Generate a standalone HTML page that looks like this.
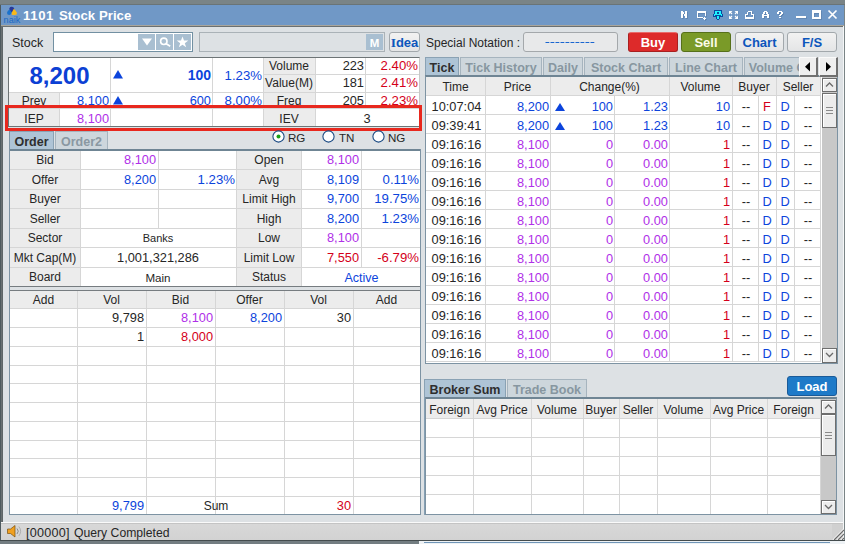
<!DOCTYPE html>
<html><head><meta charset="utf-8"><style>
html,body{margin:0;padding:0;width:845px;height:544px;overflow:hidden;position:relative}
body>div,body>svg{position:absolute}
.t{font-family:"Liberation Sans",sans-serif;white-space:nowrap;overflow:visible}
</style></head><body>
<div style="left:0px;top:0px;width:845px;height:544px;background:#7a8486"></div>
<div style="left:0px;top:4px;width:845px;height:1px;background:#6a7476"></div>
<div style="left:1px;top:5px;width:843px;height:20px;background:#7098c6"></div>
<div style="left:0px;top:5px;width:1px;height:539px;background:#4e5a5e"></div>
<div style="left:1px;top:26px;width:1px;height:514px;background:#8e9496"></div>
<div style="left:1px;top:25px;width:843px;height:1px;background:#a8a59c"></div>
<div style="left:1px;top:26px;width:843px;height:518px;background:#6a7072"></div>
<div style="left:3px;top:27px;width:840px;height:495px;background:#dde1e4"></div>
<div style="left:843px;top:26px;width:1px;height:515px;background:#f4f6f7"></div>
<div style="left:2px;top:27px;width:1px;height:495px;background:#5e6668"></div>
<div class="t" style="left:23px;top:6px;width:40px;height:20px;line-height:20px;text-align:left;color:#fff;font-size:13.2px;font-weight:700;letter-spacing:0.6px">1101</div>
<div class="t" style="left:59px;top:6px;width:100px;height:20px;line-height:20px;text-align:left;color:#fff;font-size:13.2px;font-weight:700;letter-spacing:0.05px">Stock Price</div>
<div class="t" style="left:12px;top:33px;width:40px;height:20px;line-height:20px;text-align:left;color:#262626;font-size:12.5px;font-weight:400;">Stock</div>
<div style="left:53px;top:32px;width:140px;height:20px;background:#fff;border:1px solid #7290a2;box-sizing:border-box"></div>
<div style="left:138px;top:34px;width:17px;height:16px;background:#a9bfd1"></div>
<div style="left:156px;top:34px;width:17px;height:16px;background:#a9bfd1"></div>
<div style="left:174px;top:34px;width:17px;height:16px;background:#a9bfd1"></div>
<div style="left:199px;top:32px;width:186px;height:20px;background:#dde1e4;border:1px solid #aab2b7;box-sizing:border-box"></div>
<div style="left:366px;top:34px;width:17px;height:16px;background:#a9bfd1"></div>
<div class="t" style="left:366px;top:33px;width:17px;height:20px;line-height:20px;text-align:center;color:#fff;font-size:11.5px;font-weight:700;">M</div>
<div style="left:389px;top:32px;width:31px;height:20px;background:linear-gradient(#f2f2f2,#e4e5e6);border:1px solid #a2a8ac;border-radius:3px;box-sizing:border-box"></div>
<div class="t" style="left:389px;top:33px;width:31px;height:20px;line-height:20px;text-align:center;color:#0c56bc;font-size:13px;font-weight:700;"><span style='font-family:"Liberation Serif",serif;font-size:13.5px'>I</span>dea</div>
<div class="t" style="left:426px;top:33px;width:100px;height:20px;line-height:20px;text-align:left;color:#262626;font-size:12px;font-weight:400;">Special Notation :</div>
<div style="left:523px;top:32px;width:95px;height:20px;background:#e8e9ea;border:1px solid #a4a8ab;border-radius:3px;box-sizing:border-box"></div>
<svg style="position:absolute;left:545px;top:40px" width="52" height="4"><line x1="0.5" y1="2.5" x2="50.5" y2="2.5" stroke="#1a66d0" stroke-width="1.2" stroke-dasharray="3.8 1.2"/></svg>
<div style="left:628px;top:32px;width:50px;height:20px;background:#dd2a2a;border:1px solid #a82020;border-top-color:#e86a6a;border-radius:3px;box-sizing:border-box"></div>
<div class="t" style="left:628px;top:33px;width:50px;height:20px;line-height:20px;text-align:center;color:#fff;font-size:13px;font-weight:700;">Buy</div>
<div style="left:681px;top:32px;width:50px;height:20px;background:#7a9a28;border:1px solid #56701a;border-radius:3px;box-sizing:border-box"></div>
<div class="t" style="left:681px;top:33px;width:50px;height:20px;line-height:20px;text-align:center;color:#fcfce8;font-size:13px;font-weight:700;">Sell</div>
<div style="left:735px;top:32px;width:49px;height:20px;background:linear-gradient(#f2f2f2,#e4e5e6);border:1px solid #a2a8ac;border-radius:3px;box-sizing:border-box"></div>
<div class="t" style="left:735px;top:33px;width:49px;height:20px;line-height:20px;text-align:center;color:#0c56bc;font-size:13px;font-weight:700;">Chart</div>
<div style="left:787px;top:32px;width:50px;height:20px;background:linear-gradient(#f2f2f2,#e4e5e6);border:1px solid #a2a8ac;border-radius:3px;box-sizing:border-box"></div>
<div class="t" style="left:787px;top:33px;width:50px;height:20px;line-height:20px;text-align:center;color:#0c56bc;font-size:13px;font-weight:700;">F/S</div>
<div style="left:8px;top:57px;width:412px;height:70px;background:#fff;border:1px solid #6d7476;border-right-color:#c8c8c8;box-sizing:border-box"></div>
<div style="left:9px;top:93px;width:50px;height:33px;background:#ececec"></div>
<div style="left:263px;top:58px;width:52px;height:68px;background:#ececec"></div>
<div style="left:9px;top:92px;width:410px;height:1px;background:#d6d6d6"></div>
<div style="left:9px;top:108px;width:410px;height:1px;background:#d6d6d6"></div>
<div style="left:263px;top:74px;width:156px;height:1px;background:#d6d6d6"></div>
<div style="left:59px;top:92px;width:1px;height:34px;background:#d6d6d6"></div>
<div style="left:110px;top:58px;width:1px;height:68px;background:#d6d6d6"></div>
<div style="left:212px;top:58px;width:1px;height:68px;background:#d6d6d6"></div>
<div style="left:263px;top:58px;width:1px;height:68px;background:#d6d6d6"></div>
<div style="left:315px;top:58px;width:1px;height:68px;background:#d6d6d6"></div>
<div style="left:365px;top:58px;width:1px;height:50px;background:#d6d6d6"></div>
<div class="t" style="left:9px;top:66px;width:101px;height:20px;line-height:20px;text-align:center;color:#0c40d4;font-size:24px;font-weight:700;">8,200</div>
<div class="t" style="left:150px;top:65px;width:61px;height:20px;line-height:20px;text-align:right;color:#0c44dc;font-size:14px;font-weight:700;">100</div>
<div class="t" style="left:200px;top:66px;width:62px;height:20px;line-height:20px;text-align:right;color:#0c44dc;font-size:13.2px;font-weight:400;">1.23%</div>
<div class="t" style="left:263px;top:56px;width:52px;height:20px;line-height:20px;text-align:center;color:#262626;font-size:12px;font-weight:400;">Volume</div>
<div class="t" style="left:300px;top:56px;width:64px;height:20px;line-height:20px;text-align:right;color:#262626;font-size:12.8px;font-weight:400;">223</div>
<div class="t" style="left:350px;top:56px;width:68px;height:20px;line-height:20px;text-align:right;color:#d4001a;font-size:13.2px;font-weight:400;">2.40%</div>
<div class="t" style="left:263px;top:73px;width:52px;height:20px;line-height:20px;text-align:center;color:#262626;font-size:12px;font-weight:400;">Value(M)</div>
<div class="t" style="left:300px;top:73px;width:64px;height:20px;line-height:20px;text-align:right;color:#262626;font-size:12.8px;font-weight:400;">181</div>
<div class="t" style="left:350px;top:73px;width:68px;height:20px;line-height:20px;text-align:right;color:#d4001a;font-size:13.2px;font-weight:400;">2.41%</div>
<div class="t" style="left:263px;top:91px;width:52px;height:20px;line-height:20px;text-align:center;color:#262626;font-size:12px;font-weight:400;">Freq</div>
<div class="t" style="left:300px;top:91px;width:64px;height:20px;line-height:20px;text-align:right;color:#262626;font-size:12.8px;font-weight:400;">205</div>
<div class="t" style="left:350px;top:91px;width:68px;height:20px;line-height:20px;text-align:right;color:#d4001a;font-size:13.2px;font-weight:400;">2.23%</div>
<div class="t" style="left:9px;top:91px;width:50px;height:20px;line-height:20px;text-align:center;color:#262626;font-size:12px;font-weight:400;">Prev</div>
<div class="t" style="left:40px;top:91px;width:69px;height:20px;line-height:20px;text-align:right;color:#0c44dc;font-size:12.8px;font-weight:400;">8,100</div>
<div class="t" style="left:150px;top:91px;width:61px;height:20px;line-height:20px;text-align:right;color:#0c44dc;font-size:12.8px;font-weight:400;">600</div>
<div class="t" style="left:200px;top:91px;width:62px;height:20px;line-height:20px;text-align:right;color:#0c44dc;font-size:13.2px;font-weight:400;">8.00%</div>
<div class="t" style="left:9px;top:109px;width:50px;height:20px;line-height:20px;text-align:center;color:#262626;font-size:12px;font-weight:400;">IEP</div>
<div class="t" style="left:40px;top:109px;width:69px;height:20px;line-height:20px;text-align:right;color:#b030e8;font-size:12.8px;font-weight:400;">8,100</div>
<div class="t" style="left:263px;top:109px;width:52px;height:20px;line-height:20px;text-align:center;color:#262626;font-size:12px;font-weight:400;">IEV</div>
<div class="t" style="left:315px;top:109px;width:104px;height:20px;line-height:20px;text-align:center;color:#262626;font-size:12.8px;font-weight:400;">3</div>
<svg style="position:absolute;left:113px;top:70px" width="10" height="9"><polygon points="5,0 10,8.5 0,8.5" fill="#0c44dc"/></svg>
<svg style="position:absolute;left:113px;top:96px" width="10" height="9"><polygon points="5,0 10,8.5 0,8.5" fill="#0c44dc"/></svg>
<div style="left:5px;top:105px;width:417px;height:26px;border:3px solid #e8281e;box-sizing:border-box"></div>
<div style="left:9px;top:131px;width:45px;height:19px;background:#aec4d6;border:1px solid #8aa2b4;border-bottom:none;box-sizing:border-box"></div>
<div class="t" style="left:9px;top:132px;width:45px;height:20px;line-height:20px;text-align:center;color:#2e2e2e;font-size:12.5px;font-weight:700;">Order</div>
<div style="left:55px;top:131px;width:53px;height:19px;background:#cdd6dc;border:1px solid #a6b4be;border-bottom:none;box-sizing:border-box"></div>
<div class="t" style="left:55px;top:132px;width:53px;height:20px;line-height:20px;text-align:center;color:#8a98a2;font-size:12.5px;font-weight:700;">Order2</div>
<svg style="position:absolute;left:272px;top:130px" width="13" height="13"><circle cx="6.5" cy="6.5" r="5.6" fill="#fff" stroke="#1c4c84" stroke-width="1.1"/></svg>
<div class="t" style="left:288px;top:128px;width:30px;height:20px;line-height:20px;text-align:left;color:#262626;font-size:11.6px;font-weight:400;">RG</div>
<svg style="position:absolute;left:322px;top:130px" width="13" height="13"><circle cx="6.5" cy="6.5" r="5.6" fill="#fff" stroke="#1c4c84" stroke-width="1.1"/></svg>
<div class="t" style="left:339px;top:128px;width:30px;height:20px;line-height:20px;text-align:left;color:#262626;font-size:11.6px;font-weight:400;">TN</div>
<svg style="position:absolute;left:372px;top:130px" width="13" height="13"><circle cx="6.5" cy="6.5" r="5.6" fill="#fff" stroke="#1c4c84" stroke-width="1.1"/></svg>
<div class="t" style="left:388px;top:128px;width:30px;height:20px;line-height:20px;text-align:left;color:#262626;font-size:11.6px;font-weight:400;">NG</div>
<svg style="position:absolute;left:272px;top:130px" width="13" height="13"><circle cx="6.5" cy="6.5" r="2" fill="#18a018"/></svg>
<div style="left:10px;top:151px;width:410px;height:135px;background:#fff"></div>
<div style="left:10px;top:149px;width:410px;height:2px;background:#6f8594"></div>
<div style="left:10px;top:286px;width:410px;height:1px;background:#767c80"></div>
<div style="left:10px;top:290px;width:410px;height:1px;background:#767c80"></div>
<div style="left:9px;top:131px;width:1px;height:384px;background:#7d93a3"></div>
<div style="left:420px;top:149px;width:1px;height:366px;background:#7d93a3"></div>
<div style="left:10px;top:151px;width:70px;height:135px;background:#ececec"></div>
<div style="left:237px;top:151px;width:64px;height:135px;background:#ececec"></div>
<div style="left:10px;top:169px;width:410px;height:1px;background:#d6d6d6"></div>
<div style="left:10px;top:189px;width:410px;height:1px;background:#d6d6d6"></div>
<div style="left:10px;top:208px;width:410px;height:1px;background:#d6d6d6"></div>
<div style="left:10px;top:228px;width:410px;height:1px;background:#d6d6d6"></div>
<div style="left:10px;top:247px;width:410px;height:1px;background:#d6d6d6"></div>
<div style="left:10px;top:267px;width:410px;height:1px;background:#d6d6d6"></div>
<div style="left:80px;top:151px;width:1px;height:135px;background:#d6d6d6"></div>
<div style="left:236px;top:151px;width:1px;height:135px;background:#d6d6d6"></div>
<div style="left:301px;top:151px;width:1px;height:135px;background:#d6d6d6"></div>
<div style="left:158px;top:151px;width:1px;height:77px;background:#d6d6d6"></div>
<div style="left:361px;top:151px;width:1px;height:116px;background:#d6d6d6"></div>
<div class="t" style="left:10px;top:150px;width:70px;height:20px;line-height:20px;text-align:center;color:#262626;font-size:12px;font-weight:400;">Bid</div>
<div class="t" style="left:237px;top:150px;width:64px;height:20px;line-height:20px;text-align:center;color:#262626;font-size:12px;font-weight:400;">Open</div>
<div class="t" style="left:10px;top:170px;width:70px;height:20px;line-height:20px;text-align:center;color:#262626;font-size:12px;font-weight:400;">Offer</div>
<div class="t" style="left:237px;top:170px;width:64px;height:20px;line-height:20px;text-align:center;color:#262626;font-size:12px;font-weight:400;">Avg</div>
<div class="t" style="left:10px;top:189px;width:70px;height:20px;line-height:20px;text-align:center;color:#262626;font-size:12px;font-weight:400;">Buyer</div>
<div class="t" style="left:237px;top:189px;width:64px;height:20px;line-height:20px;text-align:center;color:#262626;font-size:12px;font-weight:400;">Limit High</div>
<div class="t" style="left:10px;top:209px;width:70px;height:20px;line-height:20px;text-align:center;color:#262626;font-size:12px;font-weight:400;">Seller</div>
<div class="t" style="left:237px;top:209px;width:64px;height:20px;line-height:20px;text-align:center;color:#262626;font-size:12px;font-weight:400;">High</div>
<div class="t" style="left:10px;top:228px;width:70px;height:20px;line-height:20px;text-align:center;color:#262626;font-size:12px;font-weight:400;">Sector</div>
<div class="t" style="left:237px;top:228px;width:64px;height:20px;line-height:20px;text-align:center;color:#262626;font-size:12px;font-weight:400;">Low</div>
<div class="t" style="left:10px;top:248px;width:70px;height:20px;line-height:20px;text-align:center;color:#262626;font-size:12px;font-weight:400;">Mkt Cap(M)</div>
<div class="t" style="left:237px;top:248px;width:64px;height:20px;line-height:20px;text-align:center;color:#262626;font-size:12px;font-weight:400;">Limit Low</div>
<div class="t" style="left:10px;top:267px;width:70px;height:20px;line-height:20px;text-align:center;color:#262626;font-size:12px;font-weight:400;">Board</div>
<div class="t" style="left:237px;top:267px;width:64px;height:20px;line-height:20px;text-align:center;color:#262626;font-size:12px;font-weight:400;">Status</div>
<div class="t" style="left:78px;top:150px;width:78px;height:20px;line-height:20px;text-align:right;color:#b030e8;font-size:12.8px;font-weight:400;">8,100</div>
<div class="t" style="left:78px;top:170px;width:78px;height:20px;line-height:20px;text-align:right;color:#0c44dc;font-size:12.8px;font-weight:400;">8,200</div>
<div class="t" style="left:157px;top:170px;width:78px;height:20px;line-height:20px;text-align:right;color:#0c44dc;font-size:13.2px;font-weight:400;">1.23%</div>
<div class="t" style="left:80px;top:228px;width:156px;height:20px;line-height:20px;text-align:center;color:#262626;font-size:11px;font-weight:400;">Banks</div>
<div class="t" style="left:80px;top:248px;width:156px;height:20px;line-height:20px;text-align:center;color:#262626;font-size:12.8px;font-weight:400;">1,001,321,286</div>
<div class="t" style="left:80px;top:268px;width:156px;height:20px;line-height:20px;text-align:center;color:#262626;font-size:11.6px;font-weight:400;">Main</div>
<div class="t" style="left:281px;top:150px;width:78px;height:20px;line-height:20px;text-align:right;color:#b030e8;font-size:12.8px;font-weight:400;">8,100</div>
<div class="t" style="left:281px;top:170px;width:78px;height:20px;line-height:20px;text-align:right;color:#0c44dc;font-size:12.8px;font-weight:400;">8,109</div>
<div class="t" style="left:340px;top:170px;width:79px;height:20px;line-height:20px;text-align:right;color:#0c44dc;font-size:13.2px;font-weight:400;">0.11%</div>
<div class="t" style="left:281px;top:189px;width:78px;height:20px;line-height:20px;text-align:right;color:#0c44dc;font-size:12.8px;font-weight:400;">9,700</div>
<div class="t" style="left:340px;top:189px;width:79px;height:20px;line-height:20px;text-align:right;color:#0c44dc;font-size:13.2px;font-weight:400;">19.75%</div>
<div class="t" style="left:281px;top:209px;width:78px;height:20px;line-height:20px;text-align:right;color:#0c44dc;font-size:12.8px;font-weight:400;">8,200</div>
<div class="t" style="left:340px;top:209px;width:79px;height:20px;line-height:20px;text-align:right;color:#0c44dc;font-size:13.2px;font-weight:400;">1.23%</div>
<div class="t" style="left:281px;top:228px;width:78px;height:20px;line-height:20px;text-align:right;color:#b030e8;font-size:12.8px;font-weight:400;">8,100</div>
<div class="t" style="left:281px;top:248px;width:78px;height:20px;line-height:20px;text-align:right;color:#d4001a;font-size:12.8px;font-weight:400;">7,550</div>
<div class="t" style="left:340px;top:248px;width:79px;height:20px;line-height:20px;text-align:right;color:#d4001a;font-size:13.2px;font-weight:400;">-6.79%</div>
<div class="t" style="left:302px;top:268px;width:119px;height:20px;line-height:20px;text-align:center;color:#0c44dc;font-size:12.5px;font-weight:400;">Active</div>
<div style="left:10px;top:291px;width:410px;height:223px;background:#fff"></div>
<div style="left:10px;top:514px;width:410px;height:1px;background:#7d93a3"></div>
<div style="left:10px;top:291px;width:410px;height:17px;background:#ececec"></div>
<div style="left:77px;top:291px;width:1px;height:223px;background:#d6d6d6"></div>
<div style="left:146px;top:291px;width:1px;height:223px;background:#d6d6d6"></div>
<div style="left:215px;top:291px;width:1px;height:223px;background:#d6d6d6"></div>
<div style="left:284px;top:291px;width:1px;height:223px;background:#d6d6d6"></div>
<div style="left:353px;top:291px;width:1px;height:223px;background:#d6d6d6"></div>
<div style="left:10px;top:308px;width:410px;height:1px;background:#d6d6d6"></div>
<div style="left:10px;top:327px;width:410px;height:1px;background:#d6d6d6"></div>
<div style="left:10px;top:346px;width:410px;height:1px;background:#d6d6d6"></div>
<div style="left:10px;top:365px;width:410px;height:1px;background:#d6d6d6"></div>
<div style="left:10px;top:383px;width:410px;height:1px;background:#d6d6d6"></div>
<div style="left:10px;top:402px;width:410px;height:1px;background:#d6d6d6"></div>
<div style="left:10px;top:421px;width:410px;height:1px;background:#d6d6d6"></div>
<div style="left:10px;top:440px;width:410px;height:1px;background:#d6d6d6"></div>
<div style="left:10px;top:458px;width:410px;height:1px;background:#d6d6d6"></div>
<div style="left:10px;top:477px;width:410px;height:1px;background:#d6d6d6"></div>
<div style="left:10px;top:496px;width:410px;height:1px;background:#d6d6d6"></div>
<div class="t" style="left:10px;top:290px;width:67px;height:20px;line-height:20px;text-align:center;color:#262626;font-size:12px;font-weight:400;">Add</div>
<div class="t" style="left:77px;top:290px;width:69px;height:20px;line-height:20px;text-align:center;color:#262626;font-size:12px;font-weight:400;">Vol</div>
<div class="t" style="left:146px;top:290px;width:69px;height:20px;line-height:20px;text-align:center;color:#262626;font-size:12px;font-weight:400;">Bid</div>
<div class="t" style="left:215px;top:290px;width:69px;height:20px;line-height:20px;text-align:center;color:#262626;font-size:12px;font-weight:400;">Offer</div>
<div class="t" style="left:284px;top:290px;width:69px;height:20px;line-height:20px;text-align:center;color:#262626;font-size:12px;font-weight:400;">Vol</div>
<div class="t" style="left:353px;top:290px;width:67px;height:20px;line-height:20px;text-align:center;color:#262626;font-size:12px;font-weight:400;">Add</div>
<div class="t" style="left:66px;top:308px;width:78px;height:20px;line-height:20px;text-align:right;color:#262626;font-size:12.8px;font-weight:400;">9,798</div>
<div class="t" style="left:135px;top:308px;width:78px;height:20px;line-height:20px;text-align:right;color:#b030e8;font-size:12.8px;font-weight:400;">8,100</div>
<div class="t" style="left:204px;top:308px;width:78px;height:20px;line-height:20px;text-align:right;color:#0c44dc;font-size:12.8px;font-weight:400;">8,200</div>
<div class="t" style="left:273px;top:308px;width:78px;height:20px;line-height:20px;text-align:right;color:#262626;font-size:12.8px;font-weight:400;">30</div>
<div class="t" style="left:66px;top:327px;width:78px;height:20px;line-height:20px;text-align:right;color:#262626;font-size:12.8px;font-weight:400;">1</div>
<div class="t" style="left:135px;top:327px;width:78px;height:20px;line-height:20px;text-align:right;color:#d4001a;font-size:12.8px;font-weight:400;">8,000</div>
<div class="t" style="left:66px;top:496px;width:78px;height:20px;line-height:20px;text-align:right;color:#0c44dc;font-size:12.8px;font-weight:400;">9,799</div>
<div class="t" style="left:273px;top:496px;width:78px;height:20px;line-height:20px;text-align:right;color:#d4001a;font-size:12.8px;font-weight:400;">30</div>
<div class="t" style="left:147px;top:496px;width:138px;height:20px;line-height:20px;text-align:center;color:#262626;font-size:12px;font-weight:400;">Sum</div>
<div style="left:425px;top:57px;width:34px;height:19px;background:#aec4d6;border:1px solid #8aa2b4;border-bottom:none;box-sizing:border-box"></div>
<div class="t" style="left:425px;top:58px;width:34px;height:20px;line-height:20px;text-align:center;color:#2e2e2e;font-size:12.5px;font-weight:700;">Tick</div>
<div style="left:460px;top:57px;width:82px;height:19px;background:#cdd6dc;border:1px solid #a6b4be;border-bottom:none;box-sizing:border-box"></div>
<div class="t" style="left:460px;top:58px;width:82px;height:20px;line-height:20px;text-align:center;color:#8796a0;font-size:12.5px;font-weight:700;">Tick History</div>
<div style="left:543px;top:57px;width:40px;height:19px;background:#cdd6dc;border:1px solid #a6b4be;border-bottom:none;box-sizing:border-box"></div>
<div class="t" style="left:543px;top:58px;width:40px;height:20px;line-height:20px;text-align:center;color:#8796a0;font-size:12.5px;font-weight:700;">Daily</div>
<div style="left:584px;top:57px;width:84px;height:19px;background:#cdd6dc;border:1px solid #a6b4be;border-bottom:none;box-sizing:border-box"></div>
<div class="t" style="left:584px;top:58px;width:84px;height:20px;line-height:20px;text-align:center;color:#8796a0;font-size:12.5px;font-weight:700;">Stock Chart</div>
<div style="left:669px;top:57px;width:74px;height:19px;background:#cdd6dc;border:1px solid #a6b4be;border-bottom:none;box-sizing:border-box"></div>
<div class="t" style="left:669px;top:58px;width:74px;height:20px;line-height:20px;text-align:center;color:#8796a0;font-size:12.5px;font-weight:700;">Line Chart</div>
<div style="left:744px;top:57px;width:90px;height:19px;background:#cdd6dc;border:1px solid #a6b4be;border-bottom:none;box-sizing:border-box"></div>
<div class="t" style="left:744px;top:58px;width:90px;height:20px;line-height:20px;text-align:center;color:#8796a0;font-size:12.5px;font-weight:700;">Volume Chart</div>
<div style="left:425px;top:75px;width:413px;height:289px;background:#fff;border:1px solid #7d93a3;border-top:2px solid #6f8594;box-sizing:border-box"></div>
<div style="left:426px;top:77px;width:395px;height:18px;background:#ececec"></div>
<div style="left:799px;top:56px;width:40px;height:19px;background:#dde1e4"></div>
<div style="left:799px;top:57px;width:19px;height:20px;background:#efefef;border:1px solid #fafafa;border-right:2px solid #707070;border-bottom:2px solid #707070;box-sizing:border-box"></div>
<svg style="position:absolute;left:799px;top:57px" width="19" height="20"><polygon points="11,5 11,14.5 6,9.75" fill="#000"/></svg>
<div style="left:819px;top:57px;width:19px;height:20px;background:#efefef;border:1px solid #fafafa;border-right:2px solid #707070;border-bottom:2px solid #707070;box-sizing:border-box"></div>
<svg style="position:absolute;left:819px;top:57px" width="19" height="20"><polygon points="7,5 7,14.5 12,9.75" fill="#000"/></svg>
<div style="left:426px;top:95px;width:395px;height:1px;background:#d6d6d6"></div>
<div style="left:426px;top:114px;width:395px;height:1px;background:#d6d6d6"></div>
<div style="left:426px;top:133px;width:395px;height:1px;background:#d6d6d6"></div>
<div style="left:426px;top:152px;width:395px;height:1px;background:#d6d6d6"></div>
<div style="left:426px;top:171px;width:395px;height:1px;background:#d6d6d6"></div>
<div style="left:426px;top:190px;width:395px;height:1px;background:#d6d6d6"></div>
<div style="left:426px;top:209px;width:395px;height:1px;background:#d6d6d6"></div>
<div style="left:426px;top:228px;width:395px;height:1px;background:#d6d6d6"></div>
<div style="left:426px;top:247px;width:395px;height:1px;background:#d6d6d6"></div>
<div style="left:426px;top:266px;width:395px;height:1px;background:#d6d6d6"></div>
<div style="left:426px;top:285px;width:395px;height:1px;background:#d6d6d6"></div>
<div style="left:426px;top:304px;width:395px;height:1px;background:#d6d6d6"></div>
<div style="left:426px;top:323px;width:395px;height:1px;background:#d6d6d6"></div>
<div style="left:426px;top:342px;width:395px;height:1px;background:#d6d6d6"></div>
<div style="left:426px;top:361px;width:395px;height:1px;background:#d6d6d6"></div>
<div style="left:485px;top:77px;width:1px;height:285px;background:#d6d6d6"></div>
<div style="left:550px;top:77px;width:1px;height:285px;background:#d6d6d6"></div>
<div style="left:669px;top:77px;width:1px;height:285px;background:#d6d6d6"></div>
<div style="left:732px;top:77px;width:1px;height:285px;background:#d6d6d6"></div>
<div style="left:776px;top:77px;width:1px;height:285px;background:#d6d6d6"></div>
<div style="left:820px;top:77px;width:1px;height:285px;background:#d6d6d6"></div>
<div style="left:614px;top:95px;width:1px;height:267px;background:#d6d6d6"></div>
<div style="left:758px;top:95px;width:1px;height:267px;background:#d6d6d6"></div>
<div style="left:794px;top:95px;width:1px;height:267px;background:#d6d6d6"></div>
<div class="t" style="left:426px;top:77px;width:59px;height:20px;line-height:20px;text-align:center;color:#262626;font-size:12px;font-weight:400;">Time</div>
<div class="t" style="left:485px;top:77px;width:65px;height:20px;line-height:20px;text-align:center;color:#262626;font-size:12px;font-weight:400;">Price</div>
<div class="t" style="left:550px;top:77px;width:119px;height:20px;line-height:20px;text-align:center;color:#262626;font-size:12px;font-weight:400;">Change(%)</div>
<div class="t" style="left:669px;top:77px;width:63px;height:20px;line-height:20px;text-align:center;color:#262626;font-size:12px;font-weight:400;">Volume</div>
<div class="t" style="left:732px;top:77px;width:44px;height:20px;line-height:20px;text-align:center;color:#262626;font-size:12px;font-weight:400;">Buyer</div>
<div class="t" style="left:776px;top:77px;width:44px;height:20px;line-height:20px;text-align:center;color:#262626;font-size:12px;font-weight:400;">Seller</div>
<div class="t" style="left:427px;top:97px;width:59px;height:20px;line-height:20px;text-align:center;color:#262626;font-size:12.8px;font-weight:400;">10:07:04</div>
<div class="t" style="left:465px;top:97px;width:84px;height:20px;line-height:20px;text-align:right;color:#0c44dc;font-size:12.8px;font-weight:400;">8,200</div>
<svg style="position:absolute;left:555px;top:103px" width="10" height="9"><polygon points="5,0 10,8 0,8" fill="#0c44dc"/></svg>
<div class="t" style="left:550px;top:97px;width:63px;height:20px;line-height:20px;text-align:right;color:#0c44dc;font-size:12.8px;font-weight:400;">100</div>
<div class="t" style="left:614px;top:97px;width:54px;height:20px;line-height:20px;text-align:right;color:#0c44dc;font-size:12.8px;font-weight:400;">1.23</div>
<div class="t" style="left:669px;top:97px;width:61px;height:20px;line-height:20px;text-align:right;color:#0c44dc;font-size:12.8px;font-weight:400;">10</div>
<div class="t" style="left:733px;top:97px;width:26px;height:20px;line-height:20px;text-align:center;color:#262626;font-size:12.8px;font-weight:400;">--</div>
<div class="t" style="left:758px;top:97px;width:18px;height:20px;line-height:20px;text-align:center;color:#d4001a;font-size:12.8px;font-weight:400;">F</div>
<div class="t" style="left:776px;top:97px;width:18px;height:20px;line-height:20px;text-align:center;color:#0c44dc;font-size:12.8px;font-weight:400;">D</div>
<div class="t" style="left:795px;top:97px;width:26px;height:20px;line-height:20px;text-align:center;color:#262626;font-size:12.8px;font-weight:400;">--</div>
<div class="t" style="left:427px;top:116px;width:59px;height:20px;line-height:20px;text-align:center;color:#262626;font-size:12.8px;font-weight:400;">09:39:41</div>
<div class="t" style="left:465px;top:116px;width:84px;height:20px;line-height:20px;text-align:right;color:#0c44dc;font-size:12.8px;font-weight:400;">8,200</div>
<svg style="position:absolute;left:555px;top:122px" width="10" height="9"><polygon points="5,0 10,8 0,8" fill="#0c44dc"/></svg>
<div class="t" style="left:550px;top:116px;width:63px;height:20px;line-height:20px;text-align:right;color:#0c44dc;font-size:12.8px;font-weight:400;">100</div>
<div class="t" style="left:614px;top:116px;width:54px;height:20px;line-height:20px;text-align:right;color:#0c44dc;font-size:12.8px;font-weight:400;">1.23</div>
<div class="t" style="left:669px;top:116px;width:61px;height:20px;line-height:20px;text-align:right;color:#0c44dc;font-size:12.8px;font-weight:400;">10</div>
<div class="t" style="left:733px;top:116px;width:26px;height:20px;line-height:20px;text-align:center;color:#262626;font-size:12.8px;font-weight:400;">--</div>
<div class="t" style="left:758px;top:116px;width:18px;height:20px;line-height:20px;text-align:center;color:#0c44dc;font-size:12.8px;font-weight:400;">D</div>
<div class="t" style="left:776px;top:116px;width:18px;height:20px;line-height:20px;text-align:center;color:#0c44dc;font-size:12.8px;font-weight:400;">D</div>
<div class="t" style="left:795px;top:116px;width:26px;height:20px;line-height:20px;text-align:center;color:#262626;font-size:12.8px;font-weight:400;">--</div>
<div class="t" style="left:427px;top:135px;width:59px;height:20px;line-height:20px;text-align:center;color:#262626;font-size:12.8px;font-weight:400;">09:16:16</div>
<div class="t" style="left:465px;top:135px;width:84px;height:20px;line-height:20px;text-align:right;color:#b030e8;font-size:12.8px;font-weight:400;">8,100</div>
<div class="t" style="left:550px;top:135px;width:63px;height:20px;line-height:20px;text-align:right;color:#b030e8;font-size:12.8px;font-weight:400;">0</div>
<div class="t" style="left:614px;top:135px;width:54px;height:20px;line-height:20px;text-align:right;color:#b030e8;font-size:12.8px;font-weight:400;">0.00</div>
<div class="t" style="left:669px;top:135px;width:61px;height:20px;line-height:20px;text-align:right;color:#d4001a;font-size:12.8px;font-weight:400;">1</div>
<div class="t" style="left:733px;top:135px;width:26px;height:20px;line-height:20px;text-align:center;color:#262626;font-size:12.8px;font-weight:400;">--</div>
<div class="t" style="left:758px;top:135px;width:18px;height:20px;line-height:20px;text-align:center;color:#0c44dc;font-size:12.8px;font-weight:400;">D</div>
<div class="t" style="left:776px;top:135px;width:18px;height:20px;line-height:20px;text-align:center;color:#0c44dc;font-size:12.8px;font-weight:400;">D</div>
<div class="t" style="left:795px;top:135px;width:26px;height:20px;line-height:20px;text-align:center;color:#262626;font-size:12.8px;font-weight:400;">--</div>
<div class="t" style="left:427px;top:154px;width:59px;height:20px;line-height:20px;text-align:center;color:#262626;font-size:12.8px;font-weight:400;">09:16:16</div>
<div class="t" style="left:465px;top:154px;width:84px;height:20px;line-height:20px;text-align:right;color:#b030e8;font-size:12.8px;font-weight:400;">8,100</div>
<div class="t" style="left:550px;top:154px;width:63px;height:20px;line-height:20px;text-align:right;color:#b030e8;font-size:12.8px;font-weight:400;">0</div>
<div class="t" style="left:614px;top:154px;width:54px;height:20px;line-height:20px;text-align:right;color:#b030e8;font-size:12.8px;font-weight:400;">0.00</div>
<div class="t" style="left:669px;top:154px;width:61px;height:20px;line-height:20px;text-align:right;color:#d4001a;font-size:12.8px;font-weight:400;">1</div>
<div class="t" style="left:733px;top:154px;width:26px;height:20px;line-height:20px;text-align:center;color:#262626;font-size:12.8px;font-weight:400;">--</div>
<div class="t" style="left:758px;top:154px;width:18px;height:20px;line-height:20px;text-align:center;color:#0c44dc;font-size:12.8px;font-weight:400;">D</div>
<div class="t" style="left:776px;top:154px;width:18px;height:20px;line-height:20px;text-align:center;color:#0c44dc;font-size:12.8px;font-weight:400;">D</div>
<div class="t" style="left:795px;top:154px;width:26px;height:20px;line-height:20px;text-align:center;color:#262626;font-size:12.8px;font-weight:400;">--</div>
<div class="t" style="left:427px;top:173px;width:59px;height:20px;line-height:20px;text-align:center;color:#262626;font-size:12.8px;font-weight:400;">09:16:16</div>
<div class="t" style="left:465px;top:173px;width:84px;height:20px;line-height:20px;text-align:right;color:#b030e8;font-size:12.8px;font-weight:400;">8,100</div>
<div class="t" style="left:550px;top:173px;width:63px;height:20px;line-height:20px;text-align:right;color:#b030e8;font-size:12.8px;font-weight:400;">0</div>
<div class="t" style="left:614px;top:173px;width:54px;height:20px;line-height:20px;text-align:right;color:#b030e8;font-size:12.8px;font-weight:400;">0.00</div>
<div class="t" style="left:669px;top:173px;width:61px;height:20px;line-height:20px;text-align:right;color:#d4001a;font-size:12.8px;font-weight:400;">1</div>
<div class="t" style="left:733px;top:173px;width:26px;height:20px;line-height:20px;text-align:center;color:#262626;font-size:12.8px;font-weight:400;">--</div>
<div class="t" style="left:758px;top:173px;width:18px;height:20px;line-height:20px;text-align:center;color:#0c44dc;font-size:12.8px;font-weight:400;">D</div>
<div class="t" style="left:776px;top:173px;width:18px;height:20px;line-height:20px;text-align:center;color:#0c44dc;font-size:12.8px;font-weight:400;">D</div>
<div class="t" style="left:795px;top:173px;width:26px;height:20px;line-height:20px;text-align:center;color:#262626;font-size:12.8px;font-weight:400;">--</div>
<div class="t" style="left:427px;top:192px;width:59px;height:20px;line-height:20px;text-align:center;color:#262626;font-size:12.8px;font-weight:400;">09:16:16</div>
<div class="t" style="left:465px;top:192px;width:84px;height:20px;line-height:20px;text-align:right;color:#b030e8;font-size:12.8px;font-weight:400;">8,100</div>
<div class="t" style="left:550px;top:192px;width:63px;height:20px;line-height:20px;text-align:right;color:#b030e8;font-size:12.8px;font-weight:400;">0</div>
<div class="t" style="left:614px;top:192px;width:54px;height:20px;line-height:20px;text-align:right;color:#b030e8;font-size:12.8px;font-weight:400;">0.00</div>
<div class="t" style="left:669px;top:192px;width:61px;height:20px;line-height:20px;text-align:right;color:#d4001a;font-size:12.8px;font-weight:400;">1</div>
<div class="t" style="left:733px;top:192px;width:26px;height:20px;line-height:20px;text-align:center;color:#262626;font-size:12.8px;font-weight:400;">--</div>
<div class="t" style="left:758px;top:192px;width:18px;height:20px;line-height:20px;text-align:center;color:#0c44dc;font-size:12.8px;font-weight:400;">D</div>
<div class="t" style="left:776px;top:192px;width:18px;height:20px;line-height:20px;text-align:center;color:#0c44dc;font-size:12.8px;font-weight:400;">D</div>
<div class="t" style="left:795px;top:192px;width:26px;height:20px;line-height:20px;text-align:center;color:#262626;font-size:12.8px;font-weight:400;">--</div>
<div class="t" style="left:427px;top:211px;width:59px;height:20px;line-height:20px;text-align:center;color:#262626;font-size:12.8px;font-weight:400;">09:16:16</div>
<div class="t" style="left:465px;top:211px;width:84px;height:20px;line-height:20px;text-align:right;color:#b030e8;font-size:12.8px;font-weight:400;">8,100</div>
<div class="t" style="left:550px;top:211px;width:63px;height:20px;line-height:20px;text-align:right;color:#b030e8;font-size:12.8px;font-weight:400;">0</div>
<div class="t" style="left:614px;top:211px;width:54px;height:20px;line-height:20px;text-align:right;color:#b030e8;font-size:12.8px;font-weight:400;">0.00</div>
<div class="t" style="left:669px;top:211px;width:61px;height:20px;line-height:20px;text-align:right;color:#d4001a;font-size:12.8px;font-weight:400;">1</div>
<div class="t" style="left:733px;top:211px;width:26px;height:20px;line-height:20px;text-align:center;color:#262626;font-size:12.8px;font-weight:400;">--</div>
<div class="t" style="left:758px;top:211px;width:18px;height:20px;line-height:20px;text-align:center;color:#0c44dc;font-size:12.8px;font-weight:400;">D</div>
<div class="t" style="left:776px;top:211px;width:18px;height:20px;line-height:20px;text-align:center;color:#0c44dc;font-size:12.8px;font-weight:400;">D</div>
<div class="t" style="left:795px;top:211px;width:26px;height:20px;line-height:20px;text-align:center;color:#262626;font-size:12.8px;font-weight:400;">--</div>
<div class="t" style="left:427px;top:230px;width:59px;height:20px;line-height:20px;text-align:center;color:#262626;font-size:12.8px;font-weight:400;">09:16:16</div>
<div class="t" style="left:465px;top:230px;width:84px;height:20px;line-height:20px;text-align:right;color:#b030e8;font-size:12.8px;font-weight:400;">8,100</div>
<div class="t" style="left:550px;top:230px;width:63px;height:20px;line-height:20px;text-align:right;color:#b030e8;font-size:12.8px;font-weight:400;">0</div>
<div class="t" style="left:614px;top:230px;width:54px;height:20px;line-height:20px;text-align:right;color:#b030e8;font-size:12.8px;font-weight:400;">0.00</div>
<div class="t" style="left:669px;top:230px;width:61px;height:20px;line-height:20px;text-align:right;color:#d4001a;font-size:12.8px;font-weight:400;">1</div>
<div class="t" style="left:733px;top:230px;width:26px;height:20px;line-height:20px;text-align:center;color:#262626;font-size:12.8px;font-weight:400;">--</div>
<div class="t" style="left:758px;top:230px;width:18px;height:20px;line-height:20px;text-align:center;color:#0c44dc;font-size:12.8px;font-weight:400;">D</div>
<div class="t" style="left:776px;top:230px;width:18px;height:20px;line-height:20px;text-align:center;color:#0c44dc;font-size:12.8px;font-weight:400;">D</div>
<div class="t" style="left:795px;top:230px;width:26px;height:20px;line-height:20px;text-align:center;color:#262626;font-size:12.8px;font-weight:400;">--</div>
<div class="t" style="left:427px;top:249px;width:59px;height:20px;line-height:20px;text-align:center;color:#262626;font-size:12.8px;font-weight:400;">09:16:16</div>
<div class="t" style="left:465px;top:249px;width:84px;height:20px;line-height:20px;text-align:right;color:#b030e8;font-size:12.8px;font-weight:400;">8,100</div>
<div class="t" style="left:550px;top:249px;width:63px;height:20px;line-height:20px;text-align:right;color:#b030e8;font-size:12.8px;font-weight:400;">0</div>
<div class="t" style="left:614px;top:249px;width:54px;height:20px;line-height:20px;text-align:right;color:#b030e8;font-size:12.8px;font-weight:400;">0.00</div>
<div class="t" style="left:669px;top:249px;width:61px;height:20px;line-height:20px;text-align:right;color:#d4001a;font-size:12.8px;font-weight:400;">1</div>
<div class="t" style="left:733px;top:249px;width:26px;height:20px;line-height:20px;text-align:center;color:#262626;font-size:12.8px;font-weight:400;">--</div>
<div class="t" style="left:758px;top:249px;width:18px;height:20px;line-height:20px;text-align:center;color:#0c44dc;font-size:12.8px;font-weight:400;">D</div>
<div class="t" style="left:776px;top:249px;width:18px;height:20px;line-height:20px;text-align:center;color:#0c44dc;font-size:12.8px;font-weight:400;">D</div>
<div class="t" style="left:795px;top:249px;width:26px;height:20px;line-height:20px;text-align:center;color:#262626;font-size:12.8px;font-weight:400;">--</div>
<div class="t" style="left:427px;top:268px;width:59px;height:20px;line-height:20px;text-align:center;color:#262626;font-size:12.8px;font-weight:400;">09:16:16</div>
<div class="t" style="left:465px;top:268px;width:84px;height:20px;line-height:20px;text-align:right;color:#b030e8;font-size:12.8px;font-weight:400;">8,100</div>
<div class="t" style="left:550px;top:268px;width:63px;height:20px;line-height:20px;text-align:right;color:#b030e8;font-size:12.8px;font-weight:400;">0</div>
<div class="t" style="left:614px;top:268px;width:54px;height:20px;line-height:20px;text-align:right;color:#b030e8;font-size:12.8px;font-weight:400;">0.00</div>
<div class="t" style="left:669px;top:268px;width:61px;height:20px;line-height:20px;text-align:right;color:#d4001a;font-size:12.8px;font-weight:400;">1</div>
<div class="t" style="left:733px;top:268px;width:26px;height:20px;line-height:20px;text-align:center;color:#262626;font-size:12.8px;font-weight:400;">--</div>
<div class="t" style="left:758px;top:268px;width:18px;height:20px;line-height:20px;text-align:center;color:#0c44dc;font-size:12.8px;font-weight:400;">D</div>
<div class="t" style="left:776px;top:268px;width:18px;height:20px;line-height:20px;text-align:center;color:#0c44dc;font-size:12.8px;font-weight:400;">D</div>
<div class="t" style="left:795px;top:268px;width:26px;height:20px;line-height:20px;text-align:center;color:#262626;font-size:12.8px;font-weight:400;">--</div>
<div class="t" style="left:427px;top:287px;width:59px;height:20px;line-height:20px;text-align:center;color:#262626;font-size:12.8px;font-weight:400;">09:16:16</div>
<div class="t" style="left:465px;top:287px;width:84px;height:20px;line-height:20px;text-align:right;color:#b030e8;font-size:12.8px;font-weight:400;">8,100</div>
<div class="t" style="left:550px;top:287px;width:63px;height:20px;line-height:20px;text-align:right;color:#b030e8;font-size:12.8px;font-weight:400;">0</div>
<div class="t" style="left:614px;top:287px;width:54px;height:20px;line-height:20px;text-align:right;color:#b030e8;font-size:12.8px;font-weight:400;">0.00</div>
<div class="t" style="left:669px;top:287px;width:61px;height:20px;line-height:20px;text-align:right;color:#d4001a;font-size:12.8px;font-weight:400;">1</div>
<div class="t" style="left:733px;top:287px;width:26px;height:20px;line-height:20px;text-align:center;color:#262626;font-size:12.8px;font-weight:400;">--</div>
<div class="t" style="left:758px;top:287px;width:18px;height:20px;line-height:20px;text-align:center;color:#0c44dc;font-size:12.8px;font-weight:400;">D</div>
<div class="t" style="left:776px;top:287px;width:18px;height:20px;line-height:20px;text-align:center;color:#0c44dc;font-size:12.8px;font-weight:400;">D</div>
<div class="t" style="left:795px;top:287px;width:26px;height:20px;line-height:20px;text-align:center;color:#262626;font-size:12.8px;font-weight:400;">--</div>
<div class="t" style="left:427px;top:306px;width:59px;height:20px;line-height:20px;text-align:center;color:#262626;font-size:12.8px;font-weight:400;">09:16:16</div>
<div class="t" style="left:465px;top:306px;width:84px;height:20px;line-height:20px;text-align:right;color:#b030e8;font-size:12.8px;font-weight:400;">8,100</div>
<div class="t" style="left:550px;top:306px;width:63px;height:20px;line-height:20px;text-align:right;color:#b030e8;font-size:12.8px;font-weight:400;">0</div>
<div class="t" style="left:614px;top:306px;width:54px;height:20px;line-height:20px;text-align:right;color:#b030e8;font-size:12.8px;font-weight:400;">0.00</div>
<div class="t" style="left:669px;top:306px;width:61px;height:20px;line-height:20px;text-align:right;color:#d4001a;font-size:12.8px;font-weight:400;">1</div>
<div class="t" style="left:733px;top:306px;width:26px;height:20px;line-height:20px;text-align:center;color:#262626;font-size:12.8px;font-weight:400;">--</div>
<div class="t" style="left:758px;top:306px;width:18px;height:20px;line-height:20px;text-align:center;color:#0c44dc;font-size:12.8px;font-weight:400;">D</div>
<div class="t" style="left:776px;top:306px;width:18px;height:20px;line-height:20px;text-align:center;color:#0c44dc;font-size:12.8px;font-weight:400;">D</div>
<div class="t" style="left:795px;top:306px;width:26px;height:20px;line-height:20px;text-align:center;color:#262626;font-size:12.8px;font-weight:400;">--</div>
<div class="t" style="left:427px;top:325px;width:59px;height:20px;line-height:20px;text-align:center;color:#262626;font-size:12.8px;font-weight:400;">09:16:16</div>
<div class="t" style="left:465px;top:325px;width:84px;height:20px;line-height:20px;text-align:right;color:#b030e8;font-size:12.8px;font-weight:400;">8,100</div>
<div class="t" style="left:550px;top:325px;width:63px;height:20px;line-height:20px;text-align:right;color:#b030e8;font-size:12.8px;font-weight:400;">0</div>
<div class="t" style="left:614px;top:325px;width:54px;height:20px;line-height:20px;text-align:right;color:#b030e8;font-size:12.8px;font-weight:400;">0.00</div>
<div class="t" style="left:669px;top:325px;width:61px;height:20px;line-height:20px;text-align:right;color:#d4001a;font-size:12.8px;font-weight:400;">1</div>
<div class="t" style="left:733px;top:325px;width:26px;height:20px;line-height:20px;text-align:center;color:#262626;font-size:12.8px;font-weight:400;">--</div>
<div class="t" style="left:758px;top:325px;width:18px;height:20px;line-height:20px;text-align:center;color:#0c44dc;font-size:12.8px;font-weight:400;">D</div>
<div class="t" style="left:776px;top:325px;width:18px;height:20px;line-height:20px;text-align:center;color:#0c44dc;font-size:12.8px;font-weight:400;">D</div>
<div class="t" style="left:795px;top:325px;width:26px;height:20px;line-height:20px;text-align:center;color:#262626;font-size:12.8px;font-weight:400;">--</div>
<div class="t" style="left:427px;top:344px;width:59px;height:20px;line-height:20px;text-align:center;color:#262626;font-size:12.8px;font-weight:400;">09:16:16</div>
<div class="t" style="left:465px;top:344px;width:84px;height:20px;line-height:20px;text-align:right;color:#b030e8;font-size:12.8px;font-weight:400;">8,100</div>
<div class="t" style="left:550px;top:344px;width:63px;height:20px;line-height:20px;text-align:right;color:#b030e8;font-size:12.8px;font-weight:400;">0</div>
<div class="t" style="left:614px;top:344px;width:54px;height:20px;line-height:20px;text-align:right;color:#b030e8;font-size:12.8px;font-weight:400;">0.00</div>
<div class="t" style="left:669px;top:344px;width:61px;height:20px;line-height:20px;text-align:right;color:#d4001a;font-size:12.8px;font-weight:400;">1</div>
<div class="t" style="left:733px;top:344px;width:26px;height:20px;line-height:20px;text-align:center;color:#262626;font-size:12.8px;font-weight:400;">--</div>
<div class="t" style="left:758px;top:344px;width:18px;height:20px;line-height:20px;text-align:center;color:#0c44dc;font-size:12.8px;font-weight:400;">D</div>
<div class="t" style="left:776px;top:344px;width:18px;height:20px;line-height:20px;text-align:center;color:#0c44dc;font-size:12.8px;font-weight:400;">D</div>
<div class="t" style="left:795px;top:344px;width:26px;height:20px;line-height:20px;text-align:center;color:#262626;font-size:12.8px;font-weight:400;">--</div>
<div style="left:822px;top:77px;width:15px;height:286px;background:#c8c8c8"></div>
<div style="left:822px;top:78px;width:15px;height:14px;background:#ececec;border:1px solid #6e6e6e;box-shadow:inset 1px 1px 0 #fff;box-sizing:border-box"></div>
<svg style="position:absolute;left:822px;top:78px" width="15" height="14"><polyline points="4,8.5 7.5,5 11,8.5" fill="none" stroke="#6a6a6a" stroke-width="1.3"/></svg>
<div style="left:822px;top:93px;width:15px;height:35px;background:#ececec;border:1px solid #6e6e6e;box-shadow:inset 1px 1px 0 #fff;box-sizing:border-box"></div>
<div style="left:826px;top:107px;width:7px;height:1px;background:#8a8a8a"></div>
<div style="left:826px;top:110px;width:7px;height:1px;background:#8a8a8a"></div>
<div style="left:826px;top:113px;width:7px;height:1px;background:#8a8a8a"></div>
<div style="left:822px;top:348px;width:15px;height:15px;background:#ececec;border:1px solid #6e6e6e;box-shadow:inset 1px 1px 0 #fff;box-sizing:border-box"></div>
<svg style="position:absolute;left:822px;top:348px" width="15" height="15"><polyline points="4,5 7.5,8.5 11,5" fill="none" stroke="#6a6a6a" stroke-width="1.3"/></svg>
<div style="left:424px;top:379px;width:82px;height:19px;background:#aec4d6;border:1px solid #8aa2b4;border-bottom:none;box-sizing:border-box"></div>
<div class="t" style="left:424px;top:380px;width:82px;height:20px;line-height:20px;text-align:center;color:#2e2e2e;font-size:12.5px;font-weight:700;">Broker Sum</div>
<div style="left:507px;top:379px;width:80px;height:19px;background:#cdd6dc;border:1px solid #a6b4be;border-bottom:none;box-sizing:border-box"></div>
<div class="t" style="left:507px;top:380px;width:80px;height:20px;line-height:20px;text-align:center;color:#8796a0;font-size:12.5px;font-weight:700;">Trade Book</div>
<div style="left:787px;top:376px;width:50px;height:20px;background:#1e7ac8;border:1px solid #1a5a98;border-radius:3px;box-sizing:border-box"></div>
<div class="t" style="left:787px;top:377px;width:50px;height:20px;line-height:20px;text-align:center;color:#fff;font-size:13px;font-weight:700;">Load</div>
<div style="left:425px;top:397px;width:412px;height:118px;background:#fff;border:1px solid #7d93a3;border-top:2px solid #6f8594;box-sizing:border-box"></div>
<div style="left:426px;top:399px;width:395px;height:19px;background:#ececec"></div>
<div style="left:424px;top:398px;width:1px;height:117px;background:#86a0b4"></div>
<div style="left:473px;top:399px;width:1px;height:115px;background:#d6d6d6"></div>
<div style="left:531px;top:399px;width:1px;height:115px;background:#d6d6d6"></div>
<div style="left:583px;top:399px;width:1px;height:115px;background:#d6d6d6"></div>
<div style="left:619px;top:399px;width:1px;height:115px;background:#d6d6d6"></div>
<div style="left:657px;top:399px;width:1px;height:115px;background:#d6d6d6"></div>
<div style="left:710px;top:399px;width:1px;height:115px;background:#d6d6d6"></div>
<div style="left:767px;top:399px;width:1px;height:115px;background:#d6d6d6"></div>
<div style="left:820px;top:399px;width:1px;height:115px;background:#d6d6d6"></div>
<div style="left:426px;top:418px;width:395px;height:1px;background:#d6d6d6"></div>
<div style="left:426px;top:437px;width:395px;height:1px;background:#d6d6d6"></div>
<div style="left:426px;top:456px;width:395px;height:1px;background:#d6d6d6"></div>
<div style="left:426px;top:475px;width:395px;height:1px;background:#d6d6d6"></div>
<div style="left:426px;top:494px;width:395px;height:1px;background:#d6d6d6"></div>
<div class="t" style="left:426px;top:400px;width:47px;height:20px;line-height:20px;text-align:center;color:#262626;font-size:12px;font-weight:400;">Foreign</div>
<div class="t" style="left:473px;top:400px;width:58px;height:20px;line-height:20px;text-align:center;color:#262626;font-size:12px;font-weight:400;">Avg Price</div>
<div class="t" style="left:531px;top:400px;width:52px;height:20px;line-height:20px;text-align:center;color:#262626;font-size:12px;font-weight:400;">Volume</div>
<div class="t" style="left:583px;top:400px;width:36px;height:20px;line-height:20px;text-align:center;color:#262626;font-size:12px;font-weight:400;">Buyer</div>
<div class="t" style="left:619px;top:400px;width:38px;height:20px;line-height:20px;text-align:center;color:#262626;font-size:12px;font-weight:400;">Seller</div>
<div class="t" style="left:657px;top:400px;width:53px;height:20px;line-height:20px;text-align:center;color:#262626;font-size:12px;font-weight:400;">Volume</div>
<div class="t" style="left:710px;top:400px;width:57px;height:20px;line-height:20px;text-align:center;color:#262626;font-size:12px;font-weight:400;">Avg Price</div>
<div class="t" style="left:767px;top:400px;width:53px;height:20px;line-height:20px;text-align:center;color:#262626;font-size:12px;font-weight:400;">Foreign</div>
<div style="left:821px;top:399px;width:15px;height:115px;background:#c8c8c8"></div>
<div style="left:821px;top:400px;width:15px;height:14px;background:#ececec;border:1px solid #6e6e6e;box-shadow:inset 1px 1px 0 #fff;box-sizing:border-box"></div>
<svg style="position:absolute;left:821px;top:400px" width="15" height="14"><polyline points="4,8.5 7.5,5 11,8.5" fill="none" stroke="#6a6a6a" stroke-width="1.3"/></svg>
<div style="left:821px;top:414px;width:15px;height:42px;background:#ececec;border:1px solid #6e6e6e;box-shadow:inset 1px 1px 0 #fff;box-sizing:border-box"></div>
<div style="left:825px;top:432px;width:7px;height:1px;background:#8a8a8a"></div>
<div style="left:825px;top:435px;width:7px;height:1px;background:#8a8a8a"></div>
<div style="left:825px;top:438px;width:7px;height:1px;background:#8a8a8a"></div>
<div style="left:821px;top:500px;width:15px;height:14px;background:#ececec;border:1px solid #6e6e6e;box-shadow:inset 1px 1px 0 #fff;box-sizing:border-box"></div>
<svg style="position:absolute;left:821px;top:500px" width="15" height="14"><polyline points="4,5 7.5,8.5 11,5" fill="none" stroke="#6a6a6a" stroke-width="1.3"/></svg>
<div style="left:1px;top:522px;width:842px;height:1px;background:#fafafa"></div>
<div style="left:1px;top:523px;width:842px;height:1px;background:#c4c4c4"></div>
<div style="left:1px;top:524px;width:842px;height:16px;background:linear-gradient(#d8d8d8,#d2d2d2)"></div>
<div style="left:0px;top:540px;width:845px;height:1px;background:#444c4e"></div>
<div style="left:0px;top:541px;width:419px;height:3px;background:#737d81"></div>
<div style="left:419px;top:541px;width:426px;height:3px;background:#eef2f5"></div>
<div style="left:424px;top:542px;width:406px;height:1px;background:#7096b8"></div>
<svg style="position:absolute;left:6px;top:525px" width="16" height="13"><polygon points="1.5,4 4.5,4 9,0.5 9,12 4.5,8.5 1.5,8.5" fill="#f0a020" stroke="#7a5010" stroke-width="0.7"/><path d="M11,3.5 Q13.5,6.2 11,9" fill="none" stroke="#8a8a8a" stroke-width="1"/><path d="M12.8,1.5 Q16.5,6.2 12.8,11" fill="none" stroke="#b0b0b0" stroke-width="1"/></svg>
<div style="left:832px;top:524px;width:11px;height:16px;background:#d0d0d0"></div>
<svg style="position:absolute;left:830px;top:526px" width="14" height="14"><path d="M3,14 L14,3 M7,14 L14,7 M11,14 L14,11" stroke="#fff" stroke-width="1.2"/><path d="M4,14 L14,4 M8,14 L14,8 M12,14 L14,12" stroke="#6a6a6a" stroke-width="1.2"/></svg>
<div class="t" style="left:26px;top:523px;width:60px;height:20px;line-height:20px;text-align:left;color:#262626;font-size:12.6px;font-weight:400;letter-spacing:0.25px">[00000]</div>
<div class="t" style="left:74px;top:523px;width:200px;height:20px;line-height:20px;text-align:left;color:#262626;font-size:12.2px;font-weight:400;">Query Completed</div>
<svg style="position:absolute;left:0px;top:0px" width="22" height="25"><path d="M9.3,8.2 Q10.2,6.6 12,6.8 Q14.2,7 14.3,9 Q14.3,10.5 12.5,12.6 L11,12.5 Q9,10.5 9.3,8.2 Z" fill="#27399a"/><path d="M9.5,9.6 Q11.2,11 11.6,12.6 Q11.6,15 9.3,15 Q7,15 7,12.8 Q7.2,11 9.5,9.6 Z" fill="#1a72cc"/><path d="M13.8,8.8 Q15.5,10.5 16.8,12.5 Q17.2,15 15,15 L12.5,15 Q11.2,14.5 11.8,12.4 Z" fill="#fab81a"/><text x="3.6" y="23" font-family="Liberation Sans" font-weight="400" font-size="8.6" textLength="16.6" lengthAdjust="spacingAndGlyphs" fill="#1a68c4">naik</text></svg>
<svg style="position:absolute;left:680px;top:10px" width="10" height="10" shape-rendering="crispEdges"><g fill="#4a6a90" opacity="0.35" transform="translate(0.5,0.5)"><rect x="1" y="1" width="2" height="7"/><rect x="5" y="1" width="2" height="7"/><rect x="3" y="2" width="1" height="2"/><rect x="4" y="4" width="1" height="2"/></g><g fill="#ffffff"><rect x="1" y="1" width="2" height="7"/><rect x="5" y="1" width="2" height="7"/><rect x="3" y="2" width="1" height="2"/><rect x="4" y="4" width="1" height="2"/></g></svg>
<svg style="position:absolute;left:696px;top:10px" width="14" height="11" shape-rendering="crispEdges"><g fill="#4a6a90" opacity="0.35" transform="translate(0.5,0.5)"><rect x="1" y="1" width="9" height="2"/><rect x="1" y="3" width="1" height="5"/><rect x="1" y="7" width="6" height="1"/><rect x="9" y="3" width="1" height="3"/><rect x="7" y="8" width="3" height="1"/><rect x="8" y="7" width="1" height="3"/></g><g fill="#ffffff"><rect x="1" y="1" width="9" height="2"/><rect x="1" y="3" width="1" height="5"/><rect x="1" y="7" width="6" height="1"/><rect x="9" y="3" width="1" height="3"/><rect x="7" y="8" width="3" height="1"/><rect x="8" y="7" width="1" height="3"/></g></svg>
<svg style="position:absolute;left:713px;top:10px" width="10" height="10" shape-rendering="crispEdges"><g fill="#0a4a9e"><rect x="1" y="0" width="8" height="4"/><rect x="0" y="4" width="10" height="3"/><rect x="3" y="7" width="4" height="2"/><rect x="4" y="9" width="2" height="1"/></g><g fill="#1ef2ff"><rect x="2" y="1" width="6" height="1"/><rect x="2" y="2" width="2" height="2"/><rect x="6" y="2" width="2" height="2"/><rect x="1" y="4" width="8" height="1"/><rect x="1" y="5" width="1" height="1"/><rect x="8" y="5" width="1" height="1"/><rect x="4" y="6" width="2" height="3"/></g></svg>
<svg style="position:absolute;left:728px;top:10px" width="11" height="10"><g fill="#4a6a90" opacity="0.35" transform="translate(0.5,0.5)"><path d="M1,1 H4.5 L1,4.5 Z M10,1 H6.5 L10,4.5 Z M1,9 H4.5 L1,5.5 Z M10,9 H6.5 L10,5.5 Z"/></g><g fill="#fff"><path d="M1,1 H4.5 L1,4.5 Z M10,1 H6.5 L10,4.5 Z M1,9 H4.5 L1,5.5 Z M10,9 H6.5 L10,5.5 Z"/></g><path d="M2,2 L4,4 M9,2 L7,4 M2,8 L4,6 M9,8 L7,6" stroke="#fff" stroke-width="1.1"/></svg>
<svg style="position:absolute;left:744px;top:10px" width="12" height="10" shape-rendering="crispEdges"><g fill="#4a6a90" opacity="0.35" transform="translate(0.5,0.5)"><rect x="4" y="1" width="4" height="1"/><rect x="3" y="2" width="1" height="3"/><rect x="7" y="2" width="1" height="3"/><rect x="1" y="4" width="2" height="1"/><rect x="8" y="4" width="2" height="1"/><rect x="1" y="5" width="1" height="3"/><rect x="9" y="5" width="1" height="3"/><rect x="1" y="7" width="9" height="2"/></g><g fill="#ffffff"><rect x="4" y="1" width="4" height="1"/><rect x="3" y="2" width="1" height="3"/><rect x="7" y="2" width="1" height="3"/><rect x="1" y="4" width="2" height="1"/><rect x="8" y="4" width="2" height="1"/><rect x="1" y="5" width="1" height="3"/><rect x="9" y="5" width="1" height="3"/><rect x="1" y="7" width="9" height="2"/></g></svg>
<svg style="position:absolute;left:761px;top:10px" width="10" height="10" shape-rendering="crispEdges"><g fill="#4a6a90" opacity="0.35" transform="translate(0.5,0.5)"><rect x="3" y="1" width="3" height="1"/><rect x="2" y="2" width="2" height="2"/><rect x="5" y="2" width="2" height="2"/><rect x="1" y="4" width="2" height="4"/><rect x="6" y="4" width="2" height="4"/><rect x="3" y="5" width="3" height="1"/></g><g fill="#ffffff"><rect x="3" y="1" width="3" height="1"/><rect x="2" y="2" width="2" height="2"/><rect x="5" y="2" width="2" height="2"/><rect x="1" y="4" width="2" height="4"/><rect x="6" y="4" width="2" height="4"/><rect x="3" y="5" width="3" height="1"/></g></svg>
<svg style="position:absolute;left:776px;top:10px" width="9" height="10" shape-rendering="crispEdges"><g fill="#4a6a90" opacity="0.35" transform="translate(0.5,0.5)"><rect x="2" y="1" width="4" height="1"/><rect x="1" y="2" width="2" height="2"/><rect x="5" y="2" width="2" height="2"/><rect x="4" y="4" width="2" height="1"/><rect x="3" y="5" width="2" height="1"/><rect x="3" y="7" width="2" height="1"/></g><g fill="#ffffff"><rect x="2" y="1" width="4" height="1"/><rect x="1" y="2" width="2" height="2"/><rect x="5" y="2" width="2" height="2"/><rect x="4" y="4" width="2" height="1"/><rect x="3" y="5" width="2" height="1"/><rect x="3" y="7" width="2" height="1"/></g></svg>
<svg style="position:absolute;left:795px;top:14px" width="12" height="6" shape-rendering="crispEdges"><g fill="#4a6a90" opacity="0.35" transform="translate(0.5,0.5)"><rect x="1" y="2" width="10" height="2"/></g><g fill="#ffffff"><rect x="1" y="2" width="10" height="2"/></g></svg>
<svg style="position:absolute;left:811px;top:9px" width="12" height="11" shape-rendering="crispEdges"><g fill="#4a6a90" opacity="0.35" transform="translate(0.5,0.5)"><rect x="1" y="1" width="9" height="3"/><rect x="1" y="4" width="2" height="5"/><rect x="8" y="4" width="2" height="5"/><rect x="1" y="8" width="9" height="2"/></g><g fill="#ffffff"><rect x="1" y="1" width="9" height="3"/><rect x="1" y="4" width="2" height="5"/><rect x="8" y="4" width="2" height="5"/><rect x="1" y="8" width="9" height="2"/></g></svg>
<svg style="position:absolute;left:827px;top:9px" width="11" height="11"><path d="M1.5,1.5 L9.5,9.5 M9.5,1.5 L1.5,9.5" stroke="#fff" stroke-width="1.7"/></svg>
<svg style="position:absolute;left:138px;top:34px" width="17" height="16"><polygon points="4,4.5 14,4.5 9,11.5" fill="#fff"/></svg>
<svg style="position:absolute;left:156px;top:34px" width="17" height="16"><circle cx="7.8" cy="7.3" r="3.2" fill="none" stroke="#fff" stroke-width="1.6"/><path d="M10.2,9.7 L14.2,12.2" stroke="#fff" stroke-width="1.6"/></svg>
<svg style="position:absolute;left:174px;top:34px" width="17" height="16"><polygon points="8.5,2.5 10,6.6 14.3,6.6 10.8,9.2 12.2,13.3 8.5,10.8 4.8,13.3 6.2,9.2 2.7,6.6 7,6.6" fill="#fff"/></svg>
</body></html>
